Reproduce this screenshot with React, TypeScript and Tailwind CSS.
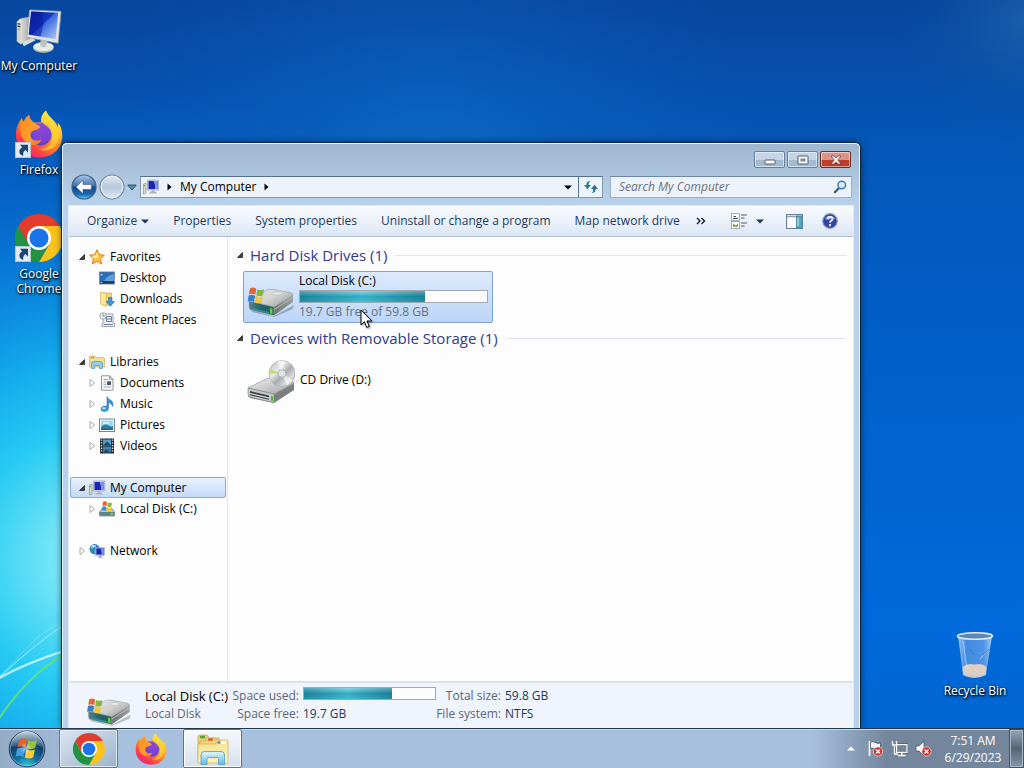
import React from 'react';
import type { ReactNode } from 'react';

type IconProps = { className?: string };

/* ---------- desktop and application icons ---------- */

function ComputerIcon({ className }: IconProps) {
  return (
    <svg viewBox="-1 -3 49 49" className={className} aria-hidden="true">
      <defs>
        <linearGradient id="pcScreen" x1="0" y1="0" x2="1" y2="1">
          <stop offset="0" stopColor="#0d1f9c" />
          <stop offset="0.45" stopColor="#1638c4" />
          <stop offset="0.5" stopColor="#3f6be0" />
          <stop offset="1" stopColor="#b4cff5" />
        </linearGradient>
        <linearGradient id="pcCase" x1="0" y1="0" x2="1" y2="0">
          <stop offset="0" stopColor="#f4f4f0" />
          <stop offset="1" stopColor="#a9a9a4" />
        </linearGradient>
      </defs>
      <path d="M1 13 L4 10 L14 8 L14 30 L5 36 L1 33 Z" fill="url(#pcCase)" stroke="#8d918f" strokeWidth="0.6" />
      <path d="M1 13 L5 14 L5 36 L1 33 Z" fill="#d4d5d0" />
      <path d="M1.600 15 L4.400 15.600 M1.600 17.500 L4.400 18.100" stroke="#333" strokeWidth="1.200" />
      <circle cx="3" cy="21" r="0.800" fill="#59a82e" />
      <path d="M6 34 L17 29 L20 32 L8 38 Z" fill="#d9dbd6" />
      <ellipse cx="28" cy="40" rx="10.500" ry="5" fill="#a9aca8" />
      <ellipse cx="28" cy="38.600" rx="10.500" ry="4.600" fill="#e9ebe6" />
      <path d="M25 30 L32 31 L31 38 Q28 40 25 38 Z" fill="#bfc3bd" />
      <path d="M14 1 L46 2.500 L43 35 L11 29 Z" fill="#dfe2df" stroke="#9da3a3" strokeWidth="0.700" />
      <path d="M15.500 2.500 L43 4 L40.500 31 L13 26 Z" fill="url(#pcScreen)" />
      <path d="M15.500 2.500 L27 3.200 Q30 15 25 28.200 L13 26 Z" fill="#07189a" opacity="0.55" />
    </svg>
  );
}

function FirefoxIcon({ className }: IconProps) {
  return (
    <svg viewBox="0 0 48 48" className={className} aria-hidden="true">
      <defs>
        <linearGradient id="ffBody" x1="0.85" y1="0.05" x2="0.2" y2="0.95">
          <stop offset="0" stopColor="#fff14a" />
          <stop offset="0.3" stopColor="#ffb929" />
          <stop offset="0.58" stopColor="#ff7a2a" />
          <stop offset="0.82" stopColor="#fb3b4b" />
          <stop offset="1" stopColor="#e5218d" />
        </linearGradient>
        <radialGradient id="ffBall" cx="0.55" cy="0.3" r="0.8">
          <stop offset="0" stopColor="#a447e6" />
          <stop offset="0.6" stopColor="#7147d6" />
          <stop offset="1" stopColor="#4c3a9e" />
        </radialGradient>
        <linearGradient id="ffFox" x1="0" y1="0" x2="1" y2="1">
          <stop offset="0" stopColor="#ff8a1e" />
          <stop offset="0.6" stopColor="#ff9f2c" />
          <stop offset="1" stopColor="#ff6a35" />
        </linearGradient>
      </defs>
      <path
        d="M31 0.500 C27 4 25.500 8 26 12 L19 12.500 C15 8.800 14 7.500 14.500 5 C10.500 7 9.300 10 8.800 12 C7.700 11.300 7 10 7 8 C2.500 13.500 1 19 1 25 C1 38 11 47.500 24.500 47.500 C38 47.500 47.300 38 47.300 25.500 C47.300 20 45.500 15 42.500 12.500 C43 14 43.300 15.500 43 17 C40 9.500 33.500 7.500 31 0.500 Z"
        fill="url(#ffBody)"
      />
      <circle cx="25.500" cy="24.500" r="11" fill="url(#ffBall)" />
      <path
        d="M27 12 C31 13 35 16 36.500 21 C35 18.500 32.500 17 30.500 17 C33 20 34 26 31 30 C28 34.500 21 35 17 32 C20.500 32.500 23 31 25 29.500 C27 28.200 27.500 26.700 26 26.700 C22.500 26.700 19 29 16 26.500 C13.800 24.500 14.500 22 17 20.500 L22.500 18.500 C25 17.400 25.500 16.500 22 16 L19 12.500 C21.500 11.800 24 11.500 27 12 Z"
        fill="#7b3fd4"
        opacity="0.55"
      />
      <path
        d="M7 8 C7 10 8.500 11.800 9.500 12.200 C10.500 9 12 6.500 14.500 5 C14 8.500 16 11 19.500 13.200 L25.500 16.600 C24.500 18.800 21.500 20 18 20.800 C15.500 22 14.800 24.500 16 27.500 C18 31.500 23 31 26.500 29.200 C25 34.500 18.500 37 13 33.500 C5.500 29 3 17 7 8 Z"
        fill="url(#ffFox)"
      />
      <path
        d="M31 0.500 C25 5.500 25 12 31 16 C36 19.500 38.500 24 37 30 C35.500 36 30 39.500 24 39.500 C34 43 43 37 44 27 C45 17 35 12 31 0.500 Z"
        fill="#ffe03a"
        opacity="0.6"
      />
    </svg>
  );
}

function ChromeIcon({ className }: IconProps) {
  return (
    <svg viewBox="0 0 48 48" className={className} aria-hidden="true">
      <path d="M24 12 L44.780 12 A24 24 0 0 1 24 48 L34.390 30 Z" fill="#fcc31e" />
      <path d="M13.610 30 L3.210 12 A24 24 0 0 0 24 48 L34.390 30 Z" fill="#229342" />
      <path d="M3.210 12 A24 24 0 0 1 44.780 12 L24 12 L13.610 30 Z" fill="#e33b2e" />
      <circle cx="24" cy="24" r="12" fill="#fff" />
      <circle cx="24" cy="24" r="9.500" fill="#1a73e8" />
    </svg>
  );
}

function ShortcutBadge({ className }: IconProps) {
  return (
    <svg viewBox="0 0 15 15" className={className} aria-hidden="true">
      <rect x="0.500" y="0.500" width="14" height="14" fill="#e3ebf3" stroke="#b9c6d3" />
      <path d="M4.500 2.500 H12.200 V10 L9.900 7.500 C7.900 8.700 7.400 10.300 7.800 13 C3.300 11.800 2.800 7.500 6.800 4.900 Z" fill="#1b4478" />
    </svg>
  );
}

function RecycleBinIcon({ className }: IconProps) {
  return (
    <svg viewBox="0 0 40 48" className={className} aria-hidden="true">
      <defs>
        <linearGradient id="binGlass" x1="0" y1="0" x2="1" y2="0">
          <stop offset="0" stopColor="#b9d4f4" stopOpacity="0.85" />
          <stop offset="0.25" stopColor="#5c9ae4" stopOpacity="0.7" />
          <stop offset="0.75" stopColor="#6ea7ec" stopOpacity="0.7" />
          <stop offset="1" stopColor="#c4dbf5" stopOpacity="0.85" />
        </linearGradient>
      </defs>
      <path d="M3 5 L8 43 Q19 49 31 43 L37 5 Z" fill="url(#binGlass)" />
      <path d="M7.500 36 Q12 32 19 33.500 Q27 31.500 31.500 36 L31 43 Q19 48 8 43 Z" fill="#dccfc0" />
      <path d="M8 41 Q19 46.500 31 41 L31 44 Q19 50 8 44 Z" fill="#c9ced2" />
      <ellipse cx="20" cy="5" rx="17.500" ry="3.300" fill="#5f88b0" stroke="#dfe8f0" strokeWidth="1.600" />
      <path d="M8 10 L12 38 M32 20 L25 28" stroke="#d8e9fb" strokeWidth="0.900" opacity="0.7" />
      <path d="M14 18 L20 24 M34 18 L28 24" stroke="#2d6fc4" strokeWidth="0.900" opacity="0.7" />
    </svg>
  );
}

function DriveIcon({ className }: IconProps) {
  return (
    <svg viewBox="0 0 48 32" className={className} aria-hidden="true">
      <defs>
        <linearGradient id="driveTop" x1="0" y1="0" x2="1" y2="0.7">
          <stop offset="0" stopColor="#ececea" />
          <stop offset="0.6" stopColor="#cfd1cf" />
          <stop offset="1" stopColor="#9ea2a1" />
        </linearGradient>
        <linearGradient id="driveSide" x1="0" y1="0" x2="1" y2="0">
          <stop offset="0" stopColor="#6f7373" />
          <stop offset="1" stopColor="#9b9f9e" />
        </linearGradient>
        <linearGradient id="driveFront" x1="0" y1="0" x2="1" y2="0">
          <stop offset="0" stopColor="#5f7d86" />
          <stop offset="0.5" stopColor="#1e6472" />
          <stop offset="1" stopColor="#2d5a50" />
        </linearGradient>
      </defs>
      <path d="M4 24 L26 31.500 L47 20 L46 24 L27 32 L5 27 Z" fill="#30363c" opacity="0.3" />
      <path d="M2 16 L20 5 Q22 4 26 4.400 L43 7.500 Q46 8.200 46 10.500 L27 22 Z" fill="url(#driveTop)" stroke="#8e9391" strokeWidth="0.500" />
      <path d="M46 10.500 V17 L27 30.500 V22 Z" fill="url(#driveSide)" />
      <path d="M46 12.500 L27 24.500" stroke="#c7cac8" strokeWidth="0.800" />
      <path d="M2 16 L27 22 V30.500 L4 25 Q2 24.500 2 22 Z" fill="url(#driveFront)" stroke="#a9b3b2" strokeWidth="0.500" />
      <path d="M5 23 L22 27 V28.500 L5 24.500 Z" fill="#2fa0a8" opacity="0.8" />
      <path d="M23 23 L25.500 23.600 V29 L23 28.400 Z" fill="#63d03a" />
      <ellipse cx="30" cy="8.500" rx="5" ry="1.800" fill="#e4e6e5" stroke="#b0b4b2" strokeWidth="0.500" />
      <path d="M3 3.500 Q6 1.500 9.300 3.800 L8.300 9.800 Q5 7.800 1.800 9.500 Z" fill="#e5642f" />
      <path d="M10.300 4.200 Q13.500 6 17 4.200 L16 10.200 Q12.500 12 9.300 10.200 Z" fill="#86b53c" />
      <path d="M1.600 10.600 Q5 8.800 8.100 11 L7 17 Q4 15.200 0.600 16.800 Z" fill="#3b80c4" />
      <path d="M9.100 11.300 Q12.500 13 15.800 11.400 L14.800 17.200 Q11.500 19 8 17.200 Z" fill="#f4c63c" />
    </svg>
  );
}

function CdDriveIcon({ className }: IconProps) {
  return (
    <svg viewBox="0 0 48 44" className={className} aria-hidden="true">
      <defs>
        <linearGradient id="cdDisc" x1="0" y1="0" x2="1" y2="1">
          <stop offset="0" stopColor="#b7bbbd" />
          <stop offset="0.35" stopColor="#e8e9ea" />
          <stop offset="0.55" stopColor="#a8adaf" />
          <stop offset="0.75" stopColor="#dadcde" />
          <stop offset="1" stopColor="#979c9e" />
        </linearGradient>
        <linearGradient id="cdTop" x1="0" y1="0" x2="1" y2="1">
          <stop offset="0" stopColor="#f0f0ef" />
          <stop offset="1" stopColor="#a2a6a6" />
        </linearGradient>
      </defs>
      <path d="M1 28 L20 18.500 L47 22 V30 L27 43 L3 38 Q1 37 1 35 Z" fill="#7b7f80" />
      <path d="M1 28 L20 18.500 Q22 17.500 25 18 L46 22 Q47 23 46 24 L27 34 Z" fill="url(#cdTop)" stroke="#8f9495" strokeWidth="0.500" />
      <path d="M1 28 L27 34 V42.500 L4 37.500 Q1 36.500 1 34 Z" fill="#c5c8c8" stroke="#7d8182" strokeWidth="0.600" />
      <path d="M3 31 L22 35.500 V37.300 L3 32.800 Z M3 34.200 L22 38.700 V39.800 L3 35.300 Z" fill="#3c4144" />
      <path d="M24 36 L26 36.500 V41 L24 40.500 Z" fill="#4fba2d" />
      <circle cx="35" cy="13.500" r="13" fill="url(#cdDisc)" stroke="#a0a5a7" strokeWidth="0.600" />
      <path d="M35 13.500 L22.500 9 A13 13 0 0 0 22.300 13.500 Z" fill="#b8d94a" opacity="0.75" />
      <path d="M35 13.500 L30 1.800 A13 13 0 0 1 38 0.900 Z M35 13.500 L46 20 A13 13 0 0 1 40 25.500 Z" fill="#fff" opacity="0.6" />
      <circle cx="35" cy="13.500" r="3.800" fill="#e3e6e8" stroke="#9da3a6" strokeWidth="0.700" />
      <circle cx="35" cy="13.500" r="1.500" fill="#fff" stroke="#a3a8ab" strokeWidth="0.400" />
    </svg>
  );
}

function StartOrb({ className }: IconProps) {
  return (
    <svg viewBox="0 0 38 38" className={className} aria-hidden="true">
      <defs>
        <radialGradient id="orbBase" cx="0.5" cy="1" r="0.95">
          <stop offset="0" stopColor="#37d2e8" />
          <stop offset="0.35" stopColor="#146f9f" />
          <stop offset="0.7" stopColor="#123f68" />
          <stop offset="1" stopColor="#3f6a8f" />
        </radialGradient>
        <linearGradient id="orbShine" x1="0" y1="0" x2="0" y2="1">
          <stop offset="0" stopColor="#fff" stopOpacity="0.65" />
          <stop offset="1" stopColor="#fff" stopOpacity="0.1" />
        </linearGradient>
        <radialGradient id="orbCore" cx="0.5" cy="0.5" r="0.5">
          <stop offset="0" stopColor="#fff" stopOpacity="0.6" />
          <stop offset="1" stopColor="#fff" stopOpacity="0" />
        </radialGradient>
      </defs>
      <circle cx="19" cy="19" r="17.800" fill="url(#orbBase)" stroke="#243e5a" strokeWidth="1" />
      <circle cx="19" cy="19" r="16.800" fill="none" stroke="#b5d6ee" strokeWidth="0.700" opacity="0.7" />
      <path d="M3 17 A16 16 0 0 1 35 17 Q19 12 3 17 Z" fill="url(#orbShine)" />
      <path d="M11.500 9.500 Q15 7 19 9.500 L17.300 17.500 Q13.500 15 9.500 17.300 Z" fill="#ec5f2a" />
      <path d="M20.300 10.200 Q24.500 12.400 29 10 L27.200 18 Q23 20.300 18.700 18 Z" fill="#94c43a" />
      <path d="M9.200 18.700 Q13 16.500 17 19 L15.300 27 Q11.500 24.500 7.500 26.700 Z" fill="#3f9fe0" />
      <path d="M18.400 19.500 Q22.700 21.700 26.900 19.500 L25.200 27.300 Q21 29.700 16.700 27.300 Z" fill="#fccf38" />
      <circle cx="18" cy="18.400" r="6" fill="url(#orbCore)" />
    </svg>
  );
}

function ExplorerIcon({ className }: IconProps) {
  return (
    <svg viewBox="0 0 34 32" className={className} aria-hidden="true">
      <defs>
        <linearGradient id="expFolder" x1="0" y1="0" x2="0" y2="1">
          <stop offset="0" stopColor="#f6e08a" />
          <stop offset="1" stopColor="#fdf3bd" />
        </linearGradient>
        <linearGradient id="expClip" x1="0" y1="0" x2="0" y2="1">
          <stop offset="0" stopColor="#d9f2fc" />
          <stop offset="1" stopColor="#66bce6" />
        </linearGradient>
      </defs>
      <path d="M2 4 Q2 2 4 2 H11 L13 5 H23 V26 H2 Z" fill="#ecd074" stroke="#c3a245" strokeWidth="0.700" />
      <rect x="4" y="2.800" width="5" height="2.500" rx="0.800" fill="#4aa33a" />
      <path d="M10 5 H19 L21 8 H30 V27 H4 V8 H10 Z" fill="#f0d67c" stroke="#c8a94d" strokeWidth="0.700" />
      <rect x="12" y="5.500" width="5" height="2.300" rx="0.800" fill="#d6502f" />
      <path d="M2 11 H20 V8 Q20 7 21 7 H31 Q32 7 32 8 V30 H2 Z" fill="url(#expFolder)" stroke="#cdb055" strokeWidth="0.700" />
      <rect x="22" y="8.300" width="8" height="2.400" rx="0.800" fill="#fff" />
      <rect x="21.500" y="8.300" width="3" height="2.400" fill="#3e85c8" />
      <path d="M5 31.500 V22 Q5 18.500 8.500 18.500 H25 Q28.500 18.500 28.500 22 V31.500 H22.500 V26 Q22.500 24.500 21 24.500 H12.500 Q11 24.500 11 26 V31.500 Z" fill="url(#expClip)" stroke="#4b9dca" strokeWidth="0.800" />
      <path d="M7 21 H27" stroke="#fff" strokeWidth="1" strokeDasharray="1.500 1.500" />
    </svg>
  );
}

/* ---------- 16px icons ---------- */

function SmallComputer({ className }: IconProps) {
  return (
    <svg viewBox="0 0 16 16" className={className} aria-hidden="true">
      <path d="M0.500 5 L3 4 V14 L0.500 15 Z" fill="#d8dcc8" stroke="#7d8a70" strokeWidth="0.600" />
      <rect x="0.800" y="6" width="1.200" height="1.200" fill="#62a84a" />
      <path d="M4.500 1 H15.500 V11 H4.500 Z" fill="#d4dae8" stroke="#8c94ac" strokeWidth="0.600" />
      <path d="M5.500 2 H14.500 V10 H5.500 Z" fill="#1c22b4" />
      <path d="M10.500 2 H14.500 V10 H12 Q12.500 6 10.500 2 Z" fill="#7b95ee" />
      <path d="M8.500 11 H11.500 V13 H13.500 V14.500 H6.500 V13 H8.500 Z" fill="#aeb4bd" />
    </svg>
  );
}

function StarIcon({ className }: IconProps) {
  return (
    <svg viewBox="0 0 16 16" className={className} aria-hidden="true">
      <path d="M8 0.800 L10.200 5.600 L15.400 6.200 L11.500 9.700 L12.700 15 L8 12.300 L3.300 15 L4.500 9.700 L0.600 6.200 L5.800 5.600 Z" fill="#ffbf40" stroke="#de7d20" strokeWidth="1" strokeLinejoin="round" />
      <path d="M8 3 L9.400 6.500 L8 9 L5 9.500 L3 7 L6.400 6.500 Z" fill="#ffec96" />
    </svg>
  );
}

function DesktopSmall({ className }: IconProps) {
  return (
    <svg viewBox="0 0 16 16" className={className} aria-hidden="true">
      <rect x="0.500" y="2" width="15" height="12" fill="#24558f" stroke="#7f8fa3" />
      <path d="M1 2.500 H15 V11 H1 Z" fill="#2c6db8" />
      <path d="M5 11 Q8 5 15 4 V11 Z" fill="#5d9fdc" />
      <rect x="1" y="11.500" width="14" height="2" fill="#1b365c" />
      <rect x="2" y="4" width="1.500" height="1.500" fill="#b7e1ff" />
      <rect x="1.500" y="12" width="2" height="1" fill="#7fe0d0" />
    </svg>
  );
}

function DownloadsSmall({ className }: IconProps) {
  return (
    <svg viewBox="0 0 16 16" className={className} aria-hidden="true">
      <path d="M4 2 H12.500 V14 H4 Z" fill="#f3d677" stroke="#d1ae48" strokeWidth="0.700" />
      <path d="M1.500 1 L7.500 2.500 V15.300 L1.500 13 Z" fill="#fae89c" stroke="#d1ae48" strokeWidth="0.700" />
      <path d="M9.500 6.500 H13 V10.500 H15.500 L11.300 15.300 L7.200 10.500 H9.500 Z" fill="#3c98dc" stroke="#1d68a8" strokeWidth="0.600" />
    </svg>
  );
}

function RecentSmall({ className }: IconProps) {
  return (
    <svg viewBox="0 0 16 16" className={className} aria-hidden="true">
      <path d="M4 2 H14 V11 H15.500 V14.500 H3 V12 H4 Z" fill="#eef1f5" stroke="#8791a0" strokeWidth="0.800" />
      <path d="M7.500 4.500 H12.500 V9.500 H7.500 Z" fill="none" stroke="#6f7d92" strokeWidth="1" />
      <path d="M7.500 7 H12.500 M5 12.500 H14" stroke="#6f7d92" strokeWidth="1" />
      <circle cx="4" cy="4" r="3.300" fill="#e8eef4" stroke="#8b96a5" strokeWidth="0.800" />
      <path d="M4 2 V4 H5.800" fill="none" stroke="#5b6675" strokeWidth="0.700" />
    </svg>
  );
}

function LibrariesSmall({ className }: IconProps) {
  return (
    <svg viewBox="0 0 16 16" className={className} aria-hidden="true">
      <path d="M0.500 3 Q0.500 2 1.500 2 H6 L7 3.500 H14.500 Q15.500 3.500 15.500 4.500 V13 H0.500 Z" fill="#f3dd92" stroke="#c9b060" strokeWidth="0.700" />
      <rect x="2" y="3" width="3" height="1.200" fill="#69b04e" />
      <path d="M2.500 14.500 V10 Q2.500 7.500 5 7.500 H11 Q13.500 7.500 13.500 10 V14.500 H10.500 V11.500 H5.500 V14.500 Z" fill="#8fd0ee" stroke="#4a94bd" strokeWidth="0.700" />
    </svg>
  );
}

function DocumentSmall({ className }: IconProps) {
  return (
    <svg viewBox="0 0 16 16" className={className} aria-hidden="true">
      <path d="M2.500 0.800 H10.500 L14 4.300 V15.200 H2.500 Z" fill="#fbfbfb" stroke="#858b92" strokeWidth="0.900" />
      <path d="M10.500 0.800 V4.300 H14 Z" fill="#d5d9de" stroke="#858b92" strokeWidth="0.700" />
      <path d="M4.500 4.500 H9 M4.500 7 H7 M4.500 9.300 H7 M4.500 12 H12" stroke="#8d98a6" strokeWidth="0.900" />
      <rect x="8" y="6.300" width="4" height="3.700" fill="#47586c" />
    </svg>
  );
}

function MusicSmall({ className }: IconProps) {
  return (
    <svg viewBox="0 0 16 16" className={className} aria-hidden="true">
      <path d="M8 0.500 Q9 3 11.500 4 Q15 6 13.500 10.500 Q13 7.500 9.500 6.500 V12 Q9.500 15.300 5.500 15.500 Q2 15.500 2 13 Q2 10.300 6 10 Q7.300 9.900 8 10.300 Z" fill="#2f95dc" stroke="#1668a8" strokeWidth="0.500" />
      <ellipse cx="4.900" cy="12.300" rx="1.900" ry="1.200" fill="#9fd6f8" />
    </svg>
  );
}

function PicturesSmall({ className }: IconProps) {
  return (
    <svg viewBox="0 0 16 16" className={className} aria-hidden="true">
      <rect x="0.500" y="2" width="15" height="12.500" fill="#fff" stroke="#768493" />
      <rect x="2" y="3.500" width="12" height="9.500" fill="#9cd6f3" />
      <path d="M2 10 Q6 6 10 8.500 Q12 10 14 9 V13 H2 Z" fill="#2d7f9a" />
      <path d="M2 11.500 H14 V13 H2 Z" fill="#2458a0" />
      <path d="M4 6 H10" stroke="#fff" strokeWidth="1" />
    </svg>
  );
}

function VideosSmall({ className }: IconProps) {
  return (
    <svg viewBox="0 0 16 16" className={className} aria-hidden="true">
      <rect x="1" y="0.500" width="14" height="15" fill="#20272f" />
      <rect x="4" y="1.500" width="8" height="6" fill="#4f9fc9" />
      <rect x="4" y="8.500" width="8" height="6" fill="#3f7fae" />
      <path d="M4 7.500 L8 3.500 L12 7.500 Z M4 14.500 L7 11 L12 14.500 Z" fill="#27475f" />
      <path d="M2.500 1.500 V15" stroke="#e8eef2" strokeWidth="1.400" strokeDasharray="1.300 1.400" />
      <path d="M13.500 1.500 V15" stroke="#e8eef2" strokeWidth="1.400" strokeDasharray="1.300 1.400" />
    </svg>
  );
}

function DriveSmall({ className }: IconProps) {
  return (
    <svg viewBox="0 0 16 16" className={className} aria-hidden="true">
      <path d="M0.500 11 L3 7.500 H13 L15.500 11 V15 H0.500 Z" fill="#c0c6c6" stroke="#6d7678" strokeWidth="0.700" />
      <path d="M0.800 11 H15.200 V14.700 H0.800 Z" fill="#5d8588" />
      <rect x="11.500" y="12" width="2.500" height="1.500" fill="#8fe04e" />
      <path d="M4 1 Q6 -0.300 8 1 L7.500 5 Q5.500 4 3.500 5 Z" fill="#ee5c26" />
      <path d="M8.800 1.400 Q11 2.500 13 1.400 L12.300 5.400 Q10.300 6.500 8.300 5.400 Z" fill="#7fbd35" />
      <path d="M3.300 5.700 Q5.300 4.700 7.300 6 L6.800 10 Q4.800 8.800 2.800 9.700 Z" fill="#2f8fd8" />
      <path d="M8.100 6.200 Q10.200 7.300 12.200 6.200 L11.600 10.200 Q9.600 11.300 7.500 10.200 Z" fill="#fcc42c" />
    </svg>
  );
}

function NetworkSmall({ className }: IconProps) {
  return (
    <svg viewBox="0 0 17 16" className={className} aria-hidden="true">
      <circle cx="6" cy="6" r="5.500" fill="#2d83c4" />
      <path d="M2 3 Q5 1 6 2 Q5 5 3 6 Q1 5 2 3 Z M6 7 Q9 5 10 8 Q8 11 6 10 Z" fill="#5fd087" />
      <ellipse cx="5" cy="3" rx="2.500" ry="1.300" fill="#c9ecff" opacity="0.8" />
      <rect x="7" y="4.500" width="9.500" height="8" fill="#dce2ee" stroke="#8089a0" strokeWidth="0.500" />
      <rect x="7.700" y="5.200" width="8.100" height="6.600" fill="#1a25ae" />
      <path d="M12.500 5.200 H15.800 V11.800 H13.500 Z" fill="#7590ec" />
      <path d="M11 12.500 H13 V14 H14.500 V15.300 H9.500 V14 H11 Z" fill="#9aa1ac" />
    </svg>
  );
}

function Triangle({ open }: { open: boolean }) {
  return (
    <svg viewBox="0 0 8 8" className="h-2 w-2 shrink-0" aria-hidden="true">
      {open ? (
        <path d="M6.500 1.500 V6.500 H1.500 Z" fill="#404040" stroke="#262626" strokeWidth="0.800" />
      ) : (
        <path d="M2 0.500 L6.500 4 L2 7.500 Z" fill="#fff" stroke="#a0a0a0" strokeWidth="0.900" />
      )}
    </svg>
  );
}

function CaretDown({ className }: IconProps) {
  return (
    <svg viewBox="0 0 8 5" className={className} aria-hidden="true">
      <path d="M0 0.500 H8 L4 4.500 Z" fill="currentColor" />
    </svg>
  );
}

function CaretRight({ className }: IconProps) {
  return (
    <svg viewBox="0 0 5 8" className={className} aria-hidden="true">
      <path d="M0.500 0.500 L4.500 4 L0.500 7.500 Z" fill="#000" />
    </svg>
  );
}

/* ---------- desktop ---------- */

function Wallpaper() {
  return (
    <svg viewBox="0 0 1024 768" preserveAspectRatio="none" className="absolute inset-0 h-full w-full" aria-hidden="true">
      <defs>
        <linearGradient id="wallBase" x1="0" y1="0" x2="0" y2="1">
          <stop offset="0" stopColor="#07469f" />
          <stop offset="0.2" stopColor="#0557b8" />
          <stop offset="0.5" stopColor="#0060ca" />
          <stop offset="0.85" stopColor="#006adb" />
          <stop offset="1" stopColor="#0066d2" />
        </linearGradient>
        <radialGradient id="wallGlow" gradientUnits="userSpaceOnUse" cx="110" cy="590" r="500">
          <stop offset="0" stopColor="#90ecf8" />
          <stop offset="0.12" stopColor="#72e4f6" />
          <stop offset="0.28" stopColor="#26cbf3" />
          <stop offset="0.42" stopColor="#14aeee" />
          <stop offset="0.58" stopColor="#0c8ce0" stopOpacity="0.9" />
          <stop offset="0.78" stopColor="#0670d0" stopOpacity="0.5" />
          <stop offset="1" stopColor="#0560c8" stopOpacity="0" />
        </radialGradient>
        <radialGradient id="wallTop" gradientUnits="userSpaceOnUse" cx="430" cy="170" r="330">
          <stop offset="0" stopColor="#1278d2" stopOpacity="0.5" />
          <stop offset="1" stopColor="#0a5cc0" stopOpacity="0" />
        </radialGradient>
        <radialGradient id="wallCorner" gradientUnits="userSpaceOnUse" cx="1024" cy="20" r="130">
          <stop offset="0" stopColor="#2a74ae" stopOpacity="0.5" />
          <stop offset="1" stopColor="#0a50a0" stopOpacity="0" />
        </radialGradient>
      </defs>
      <rect width="1024" height="768" fill="url(#wallBase)" />
      <rect width="1024" height="768" fill="url(#wallTop)" />
      <rect width="1024" height="768" fill="url(#wallGlow)" />
      <rect width="1024" height="768" fill="url(#wallCorner)" />
      <g fill="none" strokeLinecap="round">
        <path d="M-2 716 Q36 678 66 658" stroke="#a8f1ff" strokeWidth="1.500" opacity="0.6" />
        <path d="M-2 716 Q24 686 36 674 T66 656" stroke="#a8f1ff" strokeWidth="1" opacity="0.4" />
        <path d="M-2 716 Q24 700 66 686" stroke="#d7f8ff" strokeWidth="2.500" opacity="0.8" />
        <path d="M-2 760 Q24 716 66 688" stroke="#5fe07a" strokeWidth="2" />
      </g>
    </svg>
  );
}

function DesktopIcon({ icon, label, shortcut }: { icon: ReactNode; label: string; shortcut?: boolean }) {
  return (
    <button type="button" className="flex w-[78px] flex-col items-center text-xs leading-[15px] text-white">
      <span className="relative h-12 w-12">
        {icon}
        {shortcut && <ShortcutBadge className="absolute bottom-0 left-0 h-4 w-4" />}
      </span>
      <span className="mt-1 text-center whitespace-pre [text-shadow:1px_1px_2px_#000,0_1px_3px_#000]">{label}</span>
    </button>
  );
}

/* ---------- explorer window ---------- */

function CaptionButtons() {
  const base = 'flex h-[17px] w-[31px] items-center justify-center rounded-xs border shadow-[inset_0_0_0_1px_rgba(255,255,255,0.5)]';
  return (
    <div className="flex gap-0.5">
      <button type="button" aria-label="Minimize" className={`${base} border-[#68809c] bg-linear-to-b from-[#c5d5e7] from-50% to-[#a3bad3] to-50%`}>
        <svg viewBox="0 0 12 6" className="mt-1 h-1.5 w-3"><rect x="1" y="1" width="10" height="4" rx="0.500" fill="#fff" stroke="#4f5a68" /></svg>
      </button>
      <button type="button" aria-label="Maximize" className={`${base} border-[#68809c] bg-linear-to-b from-[#c5d5e7] from-50% to-[#a3bad3] to-50%`}>
        <svg viewBox="0 0 12 10" className="h-2.5 w-3"><rect x="1" y="1" width="10" height="8" rx="0.500" fill="#fff" stroke="#4f5a68" /><rect x="4" y="4" width="4" height="2" fill="#b6c8dc" stroke="#4f5a68" strokeWidth="0.800" /></svg>
      </button>
      <button type="button" aria-label="Close" className={`${base} border-[#6b2d2c] bg-linear-to-b from-[#dc9487] from-50% to-[#bb3e2c] to-50%`}>
        <svg viewBox="0 0 12 10" className="h-2.5 w-3"><path d="M1 1 H4 L6 3.200 L8 1 H11 L7.700 5 L11 9 H8 L6 6.800 L4 9 H1 L4.300 5 Z" fill="#fff" stroke="#5a3a3a" strokeWidth="0.700" /></svg>
      </button>
    </div>
  );
}

function NavButtons() {
  return (
    <div className="flex shrink-0 items-center">
      <button type="button" aria-label="Back" className="h-[26px] w-[26px]">
        <svg viewBox="0 0 26 26">
          <defs>
            <linearGradient id="backFill" x1="0" y1="0" x2="0" y2="1">
              <stop offset="0" stopColor="#a9c6e6" />
              <stop offset="0.45" stopColor="#3f74b4" />
              <stop offset="0.5" stopColor="#0f468f" />
              <stop offset="0.8" stopColor="#1769b4" />
              <stop offset="1" stopColor="#4fd0f4" />
            </linearGradient>
          </defs>
          <circle cx="13" cy="13" r="12" fill="url(#backFill)" stroke="#45607f" strokeWidth="1.200" />
          <path d="M5 13 L12 6.300 V10.600 H20.500 V15.400 H12 V19.700 Z" fill="#fff" stroke="#1d4679" strokeWidth="0.500" />
        </svg>
      </button>
      <button type="button" aria-label="Forward" className="ml-0.5 h-[26px] w-[26px]">
        <svg viewBox="0 0 26 26">
          <defs>
            <linearGradient id="fwdFill" x1="0" y1="0" x2="0" y2="1">
              <stop offset="0" stopColor="#e0e9f3" />
              <stop offset="0.5" stopColor="#b9cadd" />
              <stop offset="1" stopColor="#dce8f4" />
            </linearGradient>
          </defs>
          <circle cx="13" cy="13" r="12" fill="url(#fwdFill)" stroke="#71859d" strokeWidth="1.100" />
          <circle cx="13" cy="13" r="10.800" fill="none" stroke="#f3f8fc" strokeWidth="0.900" />
        </svg>
      </button>
      <button type="button" aria-label="Recent pages" className="ml-px flex h-5 w-3 items-center justify-center">
        <svg viewBox="0 0 10 7" className="h-[7px] w-2.5"><path d="M0.800 1 H9.200 L5 6 Z" fill="#4f8fae" stroke="#1f4a68" strokeWidth="0.900" /></svg>
      </button>
    </div>
  );
}

function AddressRow() {
  return (
    <div className="flex h-[26px] items-center pr-0.5 pl-[3px]">
      <NavButtons />
      <div className="ml-0.5 flex h-[22px] min-w-0 flex-1 items-center border border-[#8297b1] border-t-[#56708f] bg-[#edf3fb]">
        <SmallComputer className="ml-0.5 h-4 w-4 shrink-0" />
        <CaretRight className="mx-2 h-2 w-[5px] shrink-0" />
        <button type="button" className="whitespace-nowrap text-black">My Computer</button>
        <CaretRight className="ml-2 h-2 w-[5px] shrink-0" />
        <span className="flex-1" />
        <button type="button" aria-label="Previous locations" className="flex h-full w-5 items-center justify-center text-black">
          <CaretDown className="h-[5px] w-2" />
        </button>
        <button type="button" aria-label="Refresh" className="flex h-full w-6 items-center justify-center border-l border-[#56708f]">
          <svg viewBox="0 0 14 14" className="h-3.5 w-3.5">
            <path d="M6.500 1 Q4.500 2 4.700 5 H7 L3.500 9.300 L0 5 H2.400 Q2.200 1.200 6.500 1 Z" fill="#2a7f8f" />
            <path d="M7.500 13 Q9.500 12 9.300 9 H7 L10.500 4.700 L14 9 H11.600 Q11.800 12.800 7.500 13 Z" fill="#2c6f8c" />
          </svg>
        </button>
      </div>
      <label className="ml-[7px] flex h-[22px] w-[242px] shrink-0 items-center border border-[#9db0c8] border-t-[#6f86a3] bg-[#edf3fb] pr-1 pl-2">
        <input type="text" aria-label="Search My Computer" placeholder="Search My Computer" className="min-w-0 flex-1 bg-transparent italic outline-none placeholder:text-[#6e7277]" />
        <svg viewBox="0 0 14 14" className="h-3.5 w-3.5" aria-hidden="true">
          <path d="M6 8 L1.800 12.200" stroke="#3c5878" strokeWidth="2.200" strokeLinecap="round" />
          <circle cx="8.800" cy="5" r="3.800" fill="#d5ecfb" stroke="#3d7fbd" strokeWidth="1.500" />
        </svg>
      </label>
    </div>
  );
}

function Toolbar() {
  const item = 'whitespace-nowrap';
  return (
    <div className="flex h-[31px] shrink-0 items-center border-b border-[#b4c1d3] bg-linear-to-b from-[#f8fbfe] via-[#ecf2fa] to-[#dbe5f3] pr-[15px] pl-[18px] text-[#1e395b]">
      <div className="flex items-center gap-6">
        <button type="button" className={`${item} flex items-center gap-1`}>Organize <CaretDown className="h-[5px] w-2" /></button>
        <button type="button" className={item}>Properties</button>
        <button type="button" className={item}>System properties</button>
        <button type="button" className={item}>Uninstall or change a program</button>
        <button type="button" className={item}>Map network drive</button>
      </div>
      <button type="button" aria-label="More commands" className="ml-4 shrink-0 text-black">
        <svg viewBox="0 0 10 8" className="h-2 w-2.5"><path d="M1 1 L4 4 L1 7 M5.500 1 L8.500 4 L5.500 7" fill="none" stroke="#1a1f2a" strokeWidth="1.400" /></svg>
      </button>
      <div className="ml-auto flex shrink-0 items-center">
        <button type="button" aria-label="Change view">
          <svg viewBox="0 0 16 16" className="h-4 w-4">
            <rect x="0.500" y="0.500" width="8" height="7" fill="#fff" stroke="#8b98a8" strokeWidth="0.800" />
            <rect x="0.500" y="8.500" width="8" height="7" fill="#fff" stroke="#8b98a8" strokeWidth="0.800" />
            <path d="M2 5.500 H7 M2.500 3.500 H5" stroke="#374858" strokeWidth="1.200" />
            <path d="M2 10.500 V13.800 H7 V10.500 L5 12.500 Z" fill="#7b9d24" />
            <path d="M10 2 H16 M10 5 H13.500 M10 10 H16 M10 13 H13.500" stroke="#4c5a6a" strokeWidth="1.200" />
          </svg>
        </button>
        <button type="button" aria-label="More view options" className="ml-[9px]"><CaretDown className="h-[5px] w-2" /></button>
        <button type="button" aria-label="Show the preview pane" className="ml-[22px]">
          <svg viewBox="0 0 17 15" className="h-[15px] w-[17px]">
            <rect x="0.600" y="0.600" width="15.800" height="13.800" fill="#fbfdff" stroke="#5c738d" />
            <path d="M1 2.500 H16" stroke="#8ea3b9" strokeWidth="1.500" />
            <rect x="10.500" y="2" width="5.500" height="12" fill="#56abbf" stroke="#447f96" strokeWidth="0.800" />
            <path d="M12 4 V12" stroke="#b7e5ec" strokeWidth="1.200" />
          </svg>
        </button>
        <button type="button" aria-label="Get help" className="ml-[19px]">
          <svg viewBox="0 0 16 16" className="h-4 w-4">
            <circle cx="8" cy="8" r="7.300" fill="#3046a0" stroke="#8b98c4" strokeWidth="1.200" />
            <path d="M2.500 6 A6 5.500 0 0 1 13.500 6 Q8 8 2.500 6 Z" fill="#90a0dc" opacity="0.6" />
            <path d="M5.500 6.200 Q5.500 3.800 8 3.800 Q10.500 3.800 10.500 6 Q10.500 7.300 9 8 Q8 8.500 8 9.800" fill="none" stroke="#fff" strokeWidth="1.700" />
            <circle cx="8" cy="12.200" r="1.100" fill="#fff" />
          </svg>
        </button>
      </div>
    </div>
  );
}

type TreeNode = { label: string; icon: ReactNode; depth: 0 | 1; arrow?: 'open' | 'closed'; selected?: boolean };

const small = 'h-4 w-4 shrink-0';

const tree: TreeNode[][] = [
  [
    { label: 'Favorites', icon: <StarIcon className={small} />, depth: 0, arrow: 'open' },
    { label: 'Desktop', icon: <DesktopSmall className={small} />, depth: 1 },
    { label: 'Downloads', icon: <DownloadsSmall className={small} />, depth: 1 },
    { label: 'Recent Places', icon: <RecentSmall className={small} />, depth: 1 },
  ],
  [
    { label: 'Libraries', icon: <LibrariesSmall className={small} />, depth: 0, arrow: 'open' },
    { label: 'Documents', icon: <DocumentSmall className={small} />, depth: 1, arrow: 'closed' },
    { label: 'Music', icon: <MusicSmall className={small} />, depth: 1, arrow: 'closed' },
    { label: 'Pictures', icon: <PicturesSmall className={small} />, depth: 1, arrow: 'closed' },
    { label: 'Videos', icon: <VideosSmall className={small} />, depth: 1, arrow: 'closed' },
  ],
  [
    { label: 'My Computer', icon: <SmallComputer className={small} />, depth: 0, arrow: 'open', selected: true },
    { label: 'Local Disk (C:)', icon: <DriveSmall className={small} />, depth: 1, arrow: 'closed' },
  ],
  [{ label: 'Network', icon: <NetworkSmall className={small} />, depth: 0, arrow: 'closed' }],
];

function NavPane() {
  return (
    <nav className="flex w-[159px] shrink-0 flex-col gap-[21px] border-r border-[#dfe6f0] bg-[#fdfdfe] px-px pt-[9px]">
      {tree.map((group) => (
        <ul key={group[0].label}>
          {group.map((node) => (
            <li key={node.label}>
              <button
                type="button"
                className={`flex h-[21px] w-full items-center rounded-xs border pr-1 text-black ${node.depth === 0 ? 'pl-[7px]' : 'pl-[17px]'} ${
                  node.selected ? 'border-[#84acdd] bg-linear-to-b from-[#e9f2fd] to-[#c3dafa]' : 'border-transparent'
                }`}
              >
                <span className="mr-[3px] flex h-2 w-2 shrink-0">{node.arrow && <Triangle open={node.arrow === 'open'} />}</span>
                {node.icon}
                <span className="ml-[5px] whitespace-nowrap">{node.label}</span>
              </button>
            </li>
          ))}
        </ul>
      ))}
    </nav>
  );
}

function UsageBar({ percent, className }: { percent: number; className: string }) {
  return (
    <div role="meter" aria-label="Space used" aria-valuenow={percent} aria-valuemin={0} aria-valuemax={100} className={`border border-[#a2a8ae] bg-[#fbfcfe] ${className}`}>
      <div className="h-full bg-linear-to-b from-[#8fd6e4] via-[#1f9cb6] to-[#35b3ca]" style={{ width: `${percent}%` }}>
        <div className="h-full bg-linear-to-r from-[#0a5b7266] via-[#5fe0f044] to-[#07526a66]" />
      </div>
    </div>
  );
}

function GroupHeader({ children }: { children: ReactNode }) {
  return (
    <h2 className="flex h-6 items-center text-[15px] leading-6 text-[#303a8a]">
      <Triangle open />
      <span className="ml-1.5 whitespace-nowrap">{children}</span>
      <span className="ml-2 h-px flex-1 bg-[#e2e4ec]" />
    </h2>
  );
}

function FileList() {
  return (
    <main className="min-w-0 flex-1 bg-[#fdfdfe] pt-1.5 pr-[7px] pl-2">
      <GroupHeader>Hard Disk Drives (1)</GroupHeader>
      <button type="button" className="mt-1 ml-[7px] flex h-[52px] w-[250px] items-center rounded-xs border border-[#7da2ce] bg-linear-to-b from-[#dceafc] to-[#bcd5f8] pr-1 pl-[3px] text-left">
        <DriveIcon className="mt-2 h-8 w-12 shrink-0" />
        <span className="ml-1 flex min-w-0 flex-1 flex-col pb-0.5">
          <span className="h-[18px] leading-[18px] text-black">Local Disk (C:)</span>
          <UsageBar percent={67} className="h-[13px]" />
          <span className="h-[17px] leading-[18px] text-[#66707f]">19.7 GB free of 59.8 GB</span>
        </span>
      </button>
      <div className="pt-[3px]">
        <GroupHeader>Devices with Removable Storage (1)</GroupHeader>
      </div>
      <button type="button" className="mt-1 ml-[7px] flex h-[52px] w-[250px] items-center pl-1 text-left text-black">
        <CdDriveIcon className="mt-1 h-11 w-12 shrink-0" />
        <span className="ml-[5px]">CD Drive (D:)</span>
      </button>
    </main>
  );
}

function DetailsPane() {
  const label = 'flex justify-end whitespace-nowrap text-[#5a6779]';
  return (
    <footer className="flex h-[47px] shrink-0 items-center border-t-2 border-[#d9e1ed] bg-[#f0f4fc] pl-[17px]">
      <DriveIcon className="mt-2.5 h-[30px] w-[46px]" />
      <div className="ml-[13px] grid grid-cols-[84px_70px_134px_68px_auto] pb-0.5 leading-[18px] text-[#1e395b]">
        <span className="text-[13px] whitespace-nowrap text-black">Local Disk (C:)</span>
        <span className={label}>Space used:</span>
        <span className="pl-1"><UsageBar percent={67} className="h-[13px] w-[133px]" /></span>
        <span className={label}>Total size:</span>
        <span className="pl-1">59.8 GB</span>
        <span className="text-[#5a6779]">Local Disk</span>
        <span className={label}>Space free:</span>
        <span className="pl-1">19.7 GB</span>
        <span className={label}>File system:</span>
        <span className="pl-1">NTFS</span>
      </div>
    </footer>
  );
}

function ExplorerWindow() {
  return (
    <section aria-label="My Computer" className="absolute top-[142px] right-[163px] bottom-0 left-[61px] flex flex-col rounded-t-md border border-b-0 border-[#10283f] bg-[#b9d1ea] shadow-[0_0_6px_rgba(0,0,0,0.5)]">
      <div className="flex min-h-0 flex-1 flex-col rounded-t-[5px] border border-b-0 border-[#e6f1fb] bg-linear-to-b from-[#9fb6cf] to-[#b9d1ea] to-[60px] px-[5px]">
        <div className="flex h-[30px] items-start justify-end pt-[7px] pr-[3px]">
          <CaptionButtons />
        </div>
        <AddressRow />
        <div className="mt-[5px] flex min-h-0 flex-1 flex-col border-x border-t border-[#dfeaf6]">
          <Toolbar />
          <div className="flex min-h-0 flex-1">
            <NavPane />
            <FileList />
          </div>
          <DetailsPane />
        </div>
      </div>
    </section>
  );
}

/* ---------- taskbar ---------- */

function RedCross({ x, y }: { x: number; y: number }) {
  return (
    <g>
      <circle cx={x} cy={y} r="4.600" fill="#d42d26" stroke="#fff" strokeWidth="0.600" />
      <path d={`M${x - 2} ${y - 2} L${x + 2} ${y + 2} M${x + 2} ${y - 2} L${x - 2} ${y + 2}`} stroke="#fff" strokeWidth="1.400" />
    </g>
  );
}

function Taskbar() {
  const slot = 'flex h-[39px] w-[59px] items-center justify-center rounded-xs border';
  return (
    <footer className="relative flex h-10 shrink-0 items-center border-t border-[#22364e] bg-linear-to-r from-[#94abc8] via-[#a7c0de] via-10% to-[#a7c0de] to-78% text-white shadow-[inset_0_1px_0_#ccd9e8]">
      <button type="button" aria-label="Start" className="ml-2 h-[38px] w-[38px]"><StartOrb className="h-[38px] w-[38px]" /></button>
      <div className="ml-[13px] flex items-center gap-[3px]">
        <button type="button" aria-label="Google Chrome" className={`${slot} border-[#64798f] bg-linear-to-br from-[#dbe6f1] to-[#9cb2cb] shadow-[inset_0_0_0_1px_#e0eaf4]`}>
          <ChromeIcon className="h-8 w-8" />
        </button>
        <button type="button" aria-label="Firefox" className={`${slot} border-transparent`}>
          <FirefoxIcon className="h-8 w-8" />
        </button>
        <button type="button" aria-label="Windows Explorer" className={`${slot} border-[#5d7289] bg-linear-to-b from-[#f6f9fc] to-[#d5e1ed] shadow-[inset_0_0_0_1px_#fff]`}>
          <ExplorerIcon className="h-8 w-[34px]" />
        </button>
      </div>
      <div className="ml-auto flex h-full items-center bg-linear-to-r from-transparent to-[#73869c] to-35% pl-8 shadow-[inset_0_1px_0_#ccd9e8]">
        <button type="button" aria-label="Show hidden icons" className="flex h-5 w-3 items-center justify-center">
          <svg viewBox="0 0 8 5" className="h-[5px] w-2"><path d="M0 4.500 L4 0.500 L8 4.500 Z" fill="#fff" /></svg>
        </button>
        <button type="button" aria-label="Action Center" className="ml-2.5">
          <svg viewBox="0 0 17 17" className="h-[17px] w-[17px]">
            <path d="M2.500 1 V16" stroke="#fff" strokeWidth="1.600" />
            <path d="M3.500 2 Q6 1 8.500 2.500 Q11 4 13.500 3 V9.500 Q11 10.500 8.500 9 Q6 7.700 3.500 8.500 Z" fill="#f2f5f8" stroke="#3b4652" strokeWidth="0.700" />
            <RedCross x={11} y={11.500} />
          </svg>
        </button>
        <button type="button" aria-label="Network" className="ml-[7px]">
          <svg viewBox="0 0 17 17" className="h-[17px] w-[17px]">
            <rect x="5.500" y="4.500" width="10.500" height="8" fill="#6c7f93" stroke="#2d3946" strokeWidth="2.400" />
            <rect x="5.500" y="4.500" width="10.500" height="8" fill="#71849a" stroke="#fff" strokeWidth="1.300" />
            <path d="M10.800 12.500 V15 M7 15.500 H14.500" stroke="#fff" strokeWidth="1.400" />
            <path d="M1.500 1 V5 H5.500 V1 M3.500 5 V10 M3.500 10 V14 H7" fill="none" stroke="#fff" strokeWidth="1.300" />
          </svg>
        </button>
        <button type="button" aria-label="Volume muted" className="ml-[7px]">
          <svg viewBox="0 0 17 17" className="h-[17px] w-[17px]">
            <path d="M1 6 H4 L9 1.500 V15.500 L4 11 H1 Z" fill="#fff" stroke="#3b4652" strokeWidth="0.700" />
            <RedCross x={11.500} y={11.500} />
          </svg>
        </button>
        <button type="button" className="ml-3 w-[58px] text-center leading-[17px] whitespace-nowrap">
          <time dateTime="2023-06-29T07:51">7:51 AM<br />6/29/2023</time>
        </button>
        <button type="button" aria-label="Show desktop" className="ml-[7px] h-full w-[15px] border border-[#46566a] bg-linear-to-b from-[#96a6b8] via-[#54657a] to-[#8496aa] shadow-[inset_0_0_0_1px_#a9b7c6]" />
      </div>
    </footer>
  );
}

export default function App() {
  return (
    <div className="flex h-screen flex-col overflow-hidden bg-[#0560c8] font-['Open_Sans','Noto_Sans',sans-serif] text-xs">
      <div className="relative min-h-0 flex-1">
        <Wallpaper />
        <div className="relative flex flex-col items-start gap-[37px] pt-1.5">
          <DesktopIcon icon={<ComputerIcon className="h-12 w-12" />} label="My Computer" />
          <DesktopIcon icon={<FirefoxIcon className="h-12 w-12" />} label="Firefox" shortcut />
          <DesktopIcon icon={<ChromeIcon className="h-12 w-12" />} label={'Google\nChrome'} shortcut />
        </div>
        <div className="absolute right-2.5 bottom-[30px]">
          <DesktopIcon icon={<RecycleBinIcon className="mx-auto h-12 w-10" />} label="Recycle Bin" />
        </div>
        <ExplorerWindow />
        <svg viewBox="0 0 13 20" className="pointer-events-none absolute top-[309px] left-[360px] h-5 w-[13px] drop-shadow-[1px_1px_1px_rgba(0,0,0,0.4)]" aria-hidden="true">
          <path d="M1 1 V16 L4.400 12.800 L6.800 18.500 L9.300 17.400 L6.900 12 H11.800 Z" fill="#fff" stroke="#000" strokeWidth="1" />
        </svg>
      </div>
      <Taskbar />
    </div>
  );
}
